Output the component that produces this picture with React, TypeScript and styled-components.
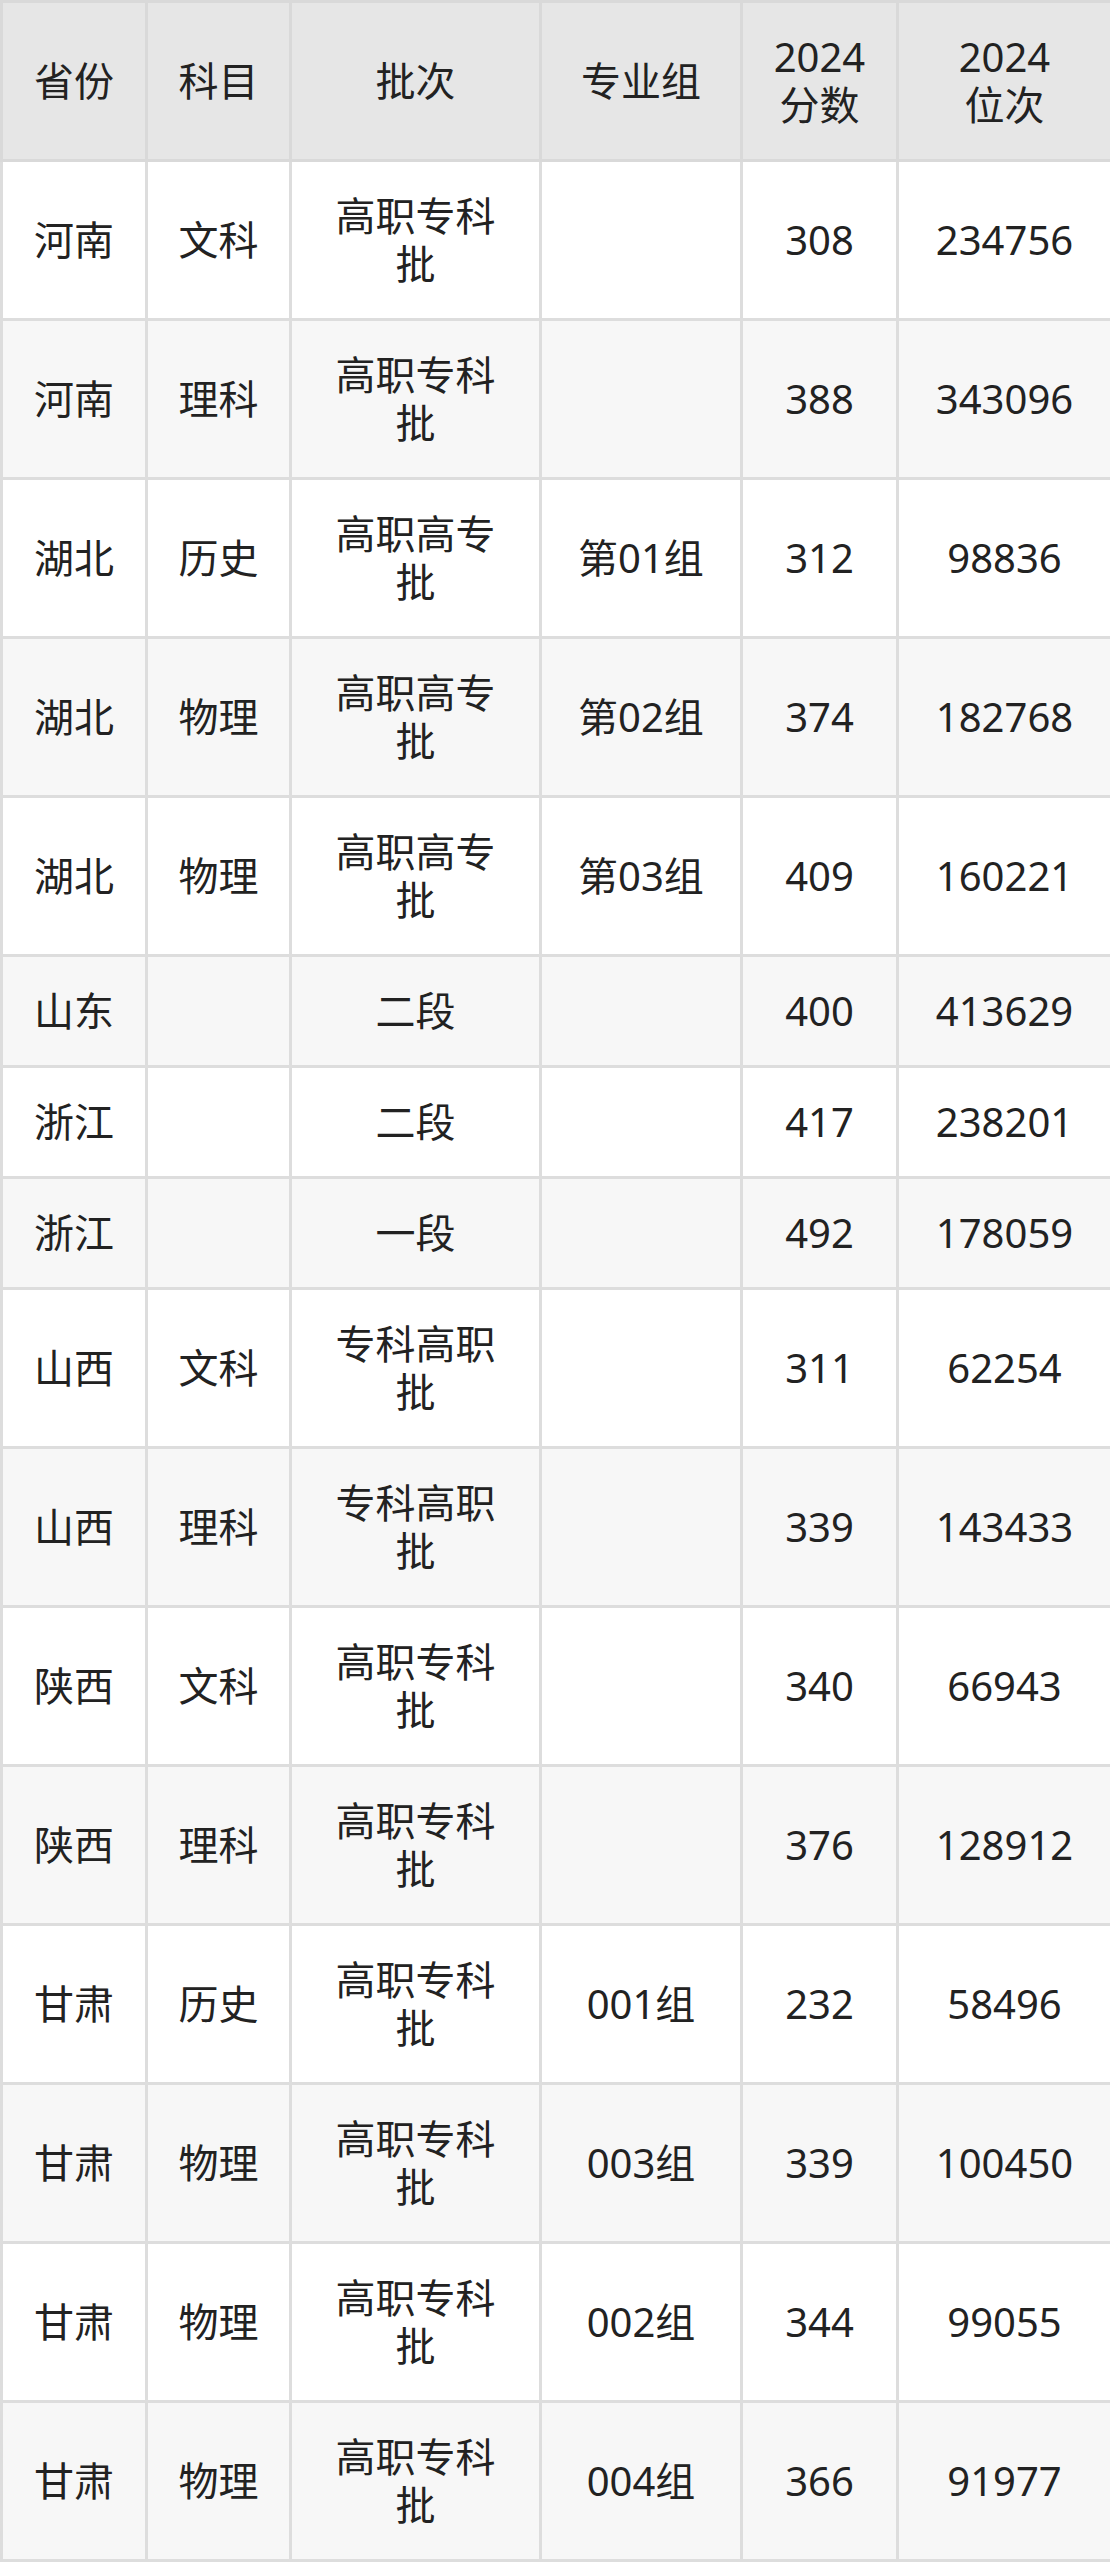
import React from "react";
import styled, { createGlobalStyle } from "styled-components";

const GlobalStyle = createGlobalStyle`
  html, body {
    margin: 0;
    padding: 0;
    background: #ffffff;
  }
  body {
    font-family: "Noto Sans", "Noto Sans CJK SC", sans-serif;
    color: #222222;
  }
`;

const Table = styled.table`
  width: 1110px;
  table-layout: fixed;
  border-collapse: collapse;
  font-size: 40px;
  line-height: 48px;
`;

const HeadCell = styled.th`
  background: #e6e6e6;
  border: 3px solid #d9d9d9;
  padding: 30px 24px;
  font-weight: 400;
  text-align: center;
  vertical-align: middle;
`;

const HeadLine = styled.span`
  display: block;
`;

const Row = styled.tr<{ $shade: boolean }>`
  background: ${(p) => (p.$shade ? "#f7f7f7" : "#ffffff")};
`;

const Cell = styled.td`
  border: 3px solid #dddddd;
  padding: 30px 24px;
  text-align: center;
  vertical-align: middle;
`;

const widths = [145, 144, 250, 201, 156, 214];

// 표头: 두 줄짜리는 배열로
const headers: string[][] = [
  ["省份"],
  ["科目"],
  ["批次"],
  ["专业组"],
  ["2024", "分数"],
  ["2024", "位次"],
];

const rows: string[][] = [
  ["河南", "文科", "高职专科批", "", "308", "234756"],
  ["河南", "理科", "高职专科批", "", "388", "343096"],
  ["湖北", "历史", "高职高专批", "第01组", "312", "98836"],
  ["湖北", "物理", "高职高专批", "第02组", "374", "182768"],
  ["湖北", "物理", "高职高专批", "第03组", "409", "160221"],
  ["山东", "", "二段", "", "400", "413629"],
  ["浙江", "", "二段", "", "417", "238201"],
  ["浙江", "", "一段", "", "492", "178059"],
  ["山西", "文科", "专科高职批", "", "311", "62254"],
  ["山西", "理科", "专科高职批", "", "339", "143433"],
  ["陕西", "文科", "高职专科批", "", "340", "66943"],
  ["陕西", "理科", "高职专科批", "", "376", "128912"],
  ["甘肃", "历史", "高职专科批", "001组", "232", "58496"],
  ["甘肃", "物理", "高职专科批", "003组", "339", "100450"],
  ["甘肃", "物理", "高职专科批", "002组", "344", "99055"],
  ["甘肃", "物理", "高职专科批", "004组", "366", "91977"],
];

const App = () => {
  return (
    <>
      <GlobalStyle />
      <Table>
        <colgroup>
          {widths.map((w, i) => (
            <col key={i} style={{ width: w }} />
          ))}
        </colgroup>
        <thead>
          <tr>
            {headers.map((h, i) => (
              <HeadCell key={i}>
                {h.map((line) => (
                  <HeadLine key={line}>{line}</HeadLine>
                ))}
              </HeadCell>
            ))}
          </tr>
        </thead>
        <tbody>
          {rows.map((r, i) => (
            <Row key={i} $shade={i % 2 === 1}>
              {r.map((c, j) => (
                <Cell key={j}>{c}</Cell>
              ))}
            </Row>
          ))}
        </tbody>
      </Table>
    </>
  );
};

export default App;
